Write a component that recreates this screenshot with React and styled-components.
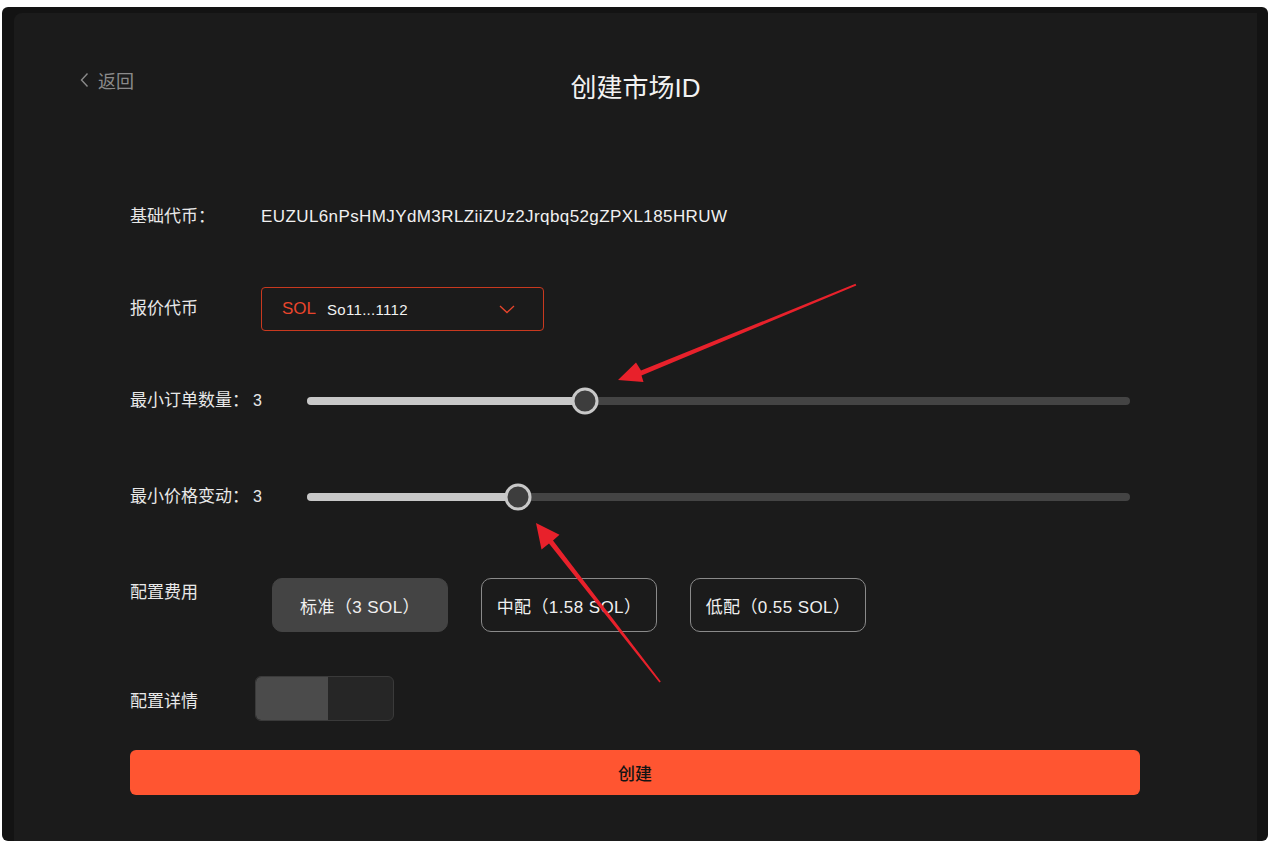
import React from 'react';
import styled, { createGlobalStyle } from 'styled-components';

const GlobalStyle = createGlobalStyle`
  html, body {
    margin: 0;
    padding: 0;
    background: #ffffff;
    font-family: "Liberation Sans", "Noto Sans CJK SC", sans-serif;
  }
`;

const Frame = styled.div`
  position: relative;
  margin: 7px 7px 0 2px;
  height: 834px;
  background: #131313;
  border-radius: 6px;
  padding: 6px 11px 0 12px;
  box-sizing: border-box;
  display: flex;
`;

const Panel = styled.main`
  flex: 1;
  background: #1b1b1b;
  border-radius: 8px 0 0 0;
  display: flex;
  flex-direction: column;
`;

const Header = styled.header`
  display: grid;
  grid-template-columns: 1fr auto 1fr;
  padding: 57px 66px 0 66px;
  height: 91px;
  box-sizing: border-box;
`;

const Back = styled.a`
  display: flex;
  align-items: center;
  gap: 9px;
  height: 20px;
  color: #8a8a8a;
  font-size: 18px;
  cursor: pointer;
`;

const Title = styled.h1`
  margin: 2px 0 0;
  font-size: 26px;
  line-height: 32px;
  font-weight: 400;
  color: #f2f2f2;
`;

const Form = styled.section`
  display: flex;
  flex-direction: column;
  padding: 0 117px 0 116px;
`;

const Row = styled.div`
  display: flex;
  align-items: ${(p) => p.$align || 'center'};
  height: ${(p) => p.$h}px;
  margin-top: ${(p) => p.$mt}px;
`;

const Label = styled.div`
  width: ${(p) => p.$w}px;
  flex: none;
  font-size: 17px;
  line-height: 20px;
  color: #e8e8e8;
  padding-top: ${(p) => p.$pt || 0}px;
  white-space: nowrap;
`;

const LabelValue = styled.span`
  margin-left: 4px;
  font-family: "Liberation Sans", sans-serif;
  font-size: 16px;
`;

const Address = styled.div`
  font-size: 17px;
  letter-spacing: 0.4px;
  color: #f0f0f0;
`;

const Select = styled.div`
  width: 283px;
  height: 44px;
  box-sizing: border-box;
  border: 1px solid #c9391f;
  border-radius: 4px;
  display: flex;
  align-items: center;
  padding: 0 28px 0 20px;
  gap: 11px;
`;

const Symbol = styled.span`
  color: #e8452c;
  font-size: 17px;
`;

const Mint = styled.span`
  flex: 1;
  color: #f2f2f2;
  font-size: 15px;
  letter-spacing: 0.3px;
`;

const Track = styled.div`
  position: relative;
  width: 823px;
  height: 8px;
  border-radius: 4px;
  background: #444444;
`;

const Fill = styled.div`
  height: 100%;
  border-radius: 4px;
  background: #c8c8c8;
`;

const Thumb = styled.div`
  position: absolute;
  top: 50%;
  width: 27px;
  height: 27px;
  box-sizing: border-box;
  border-radius: 50%;
  border: 3px solid #c8c8c8;
  background: #3d3d3d;
  transform: translate(-50%, -50%);
`;

const Options = styled.div`
  display: flex;
  gap: 33px;
`;

const Option = styled.button`
  width: 176px;
  height: 54px;
  box-sizing: border-box;
  border-radius: 10px;
  border: 1px solid ${(p) => (p.$active ? '#444444' : '#8a8a8a')};
  background: ${(p) => (p.$active ? '#444444' : 'transparent')};
  color: #f0f0f0;
  font-family: "Liberation Sans", "Noto Sans CJK SC", sans-serif;
  font-size: 17px;
  letter-spacing: 0.4px;
  padding: 0 8px;
  white-space: nowrap;
  cursor: pointer;
`;

const Toggle = styled.div`
  width: 139px;
  height: 45px;
  box-sizing: border-box;
  border: 1px solid #3a3a3a;
  border-radius: 6px;
  background: #262626;
  overflow: hidden;
  display: flex;
`;

const Knob = styled.div`
  width: 72px;
  background: #4b4b4b;
  border-radius: 5px 0 0 5px;
`;

const Create = styled.button`
  width: 100%;
  height: 45px;
  border: none;
  border-radius: 6px;
  background: #ff5531;
  color: #141414;
  font-family: "Liberation Sans", "Noto Sans CJK SC", sans-serif;
  font-size: 17px;
  font-weight: 500;
  cursor: pointer;
`;

const Overlay = styled.svg`
  position: absolute;
  left: 0;
  top: 0;
  pointer-events: none;
`;

const Slider = ({ pct }) => (
  <Track>
    <Fill style={{ width: `${pct}%` }} />
    <Thumb style={{ left: `${pct}%` }} />
  </Track>
);

const fees = [
  { text: '标准（3 SOL）', active: true },
  { text: '中配（1.58 SOL）' },
  { text: '低配（0.55 SOL）' },
];

export default function App() {
  return (
    <>
      <GlobalStyle />
      <Frame>
        <Panel>
          <Header>
            <Back>
              <svg width="9" height="16" viewBox="0 0 9 16" fill="none">
                <path d="M7.5 1.5 1.5 8l6 6.5" stroke="#8a8a8a" strokeWidth="1.4" />
              </svg>
              返回
            </Back>
            <Title>创建市场ID</Title>
            <div />
          </Header>

          <Form>
            <Row $h={44} $mt={91}>
              <Label $w={131}>基础代币：</Label>
              <Address>EUZUL6nPsHMJYdM3RLZiiZUz2Jrqbq52gZPXL185HRUW</Address>
            </Row>

            <Row $h={44} $mt={48}>
              <Label $w={131}>报价代币</Label>
              <Select>
                <Symbol>SOL</Symbol>
                <Mint>So11...1112</Mint>
                <svg width="16" height="9" viewBox="0 0 16 9" fill="none">
                  <path d="M1 1l7 6.5L15 1" stroke="#e8452c" strokeWidth="1.3" />
                </svg>
              </Select>
            </Row>

            <Row $h={44} $mt={48}>
              <Label $w={177}>最小订单数量：<LabelValue>3</LabelValue></Label>
              <Slider pct={33.8} />
            </Row>

            <Row $h={44} $mt={52}>
              <Label $w={177}>最小价格变动：<LabelValue>3</LabelValue></Label>
              <Slider pct={25.6} />
            </Row>

            <Row $h={54} $mt={59} $align="flex-start">
              <Label $w={142} $pt={5}>配置费用</Label>
              <Options>
                {fees.map((f) => (
                  <Option key={f.text} $active={f.active}>{f.text}</Option>
                ))}
              </Options>
            </Row>

            <Row $h={45} $mt={44}>
              <Label $w={125} $pt={7}>配置详情</Label>
              <Toggle>
                <Knob />
              </Toggle>
            </Row>

            <Row $h={45} $mt={29}>
              <Create>创建</Create>
            </Row>
          </Form>
        </Panel>
      </Frame>

      <Overlay width="1275" height="848" viewBox="0 0 1275 848">
        <polygon
          points="855.5,283.8 641,370.6 636,362.5 618,380 643.5,382 641.5,375.4 856.3,285.6"
          fill="#e8212b"
        />
        <polygon
          points="660.8,681.6 553,540.6 559.5,534.8 536,523 541.5,549.5 549,543.6 659.4,682.6"
          fill="#e8212b"
        />
      </Overlay>
    </>
  );
}
